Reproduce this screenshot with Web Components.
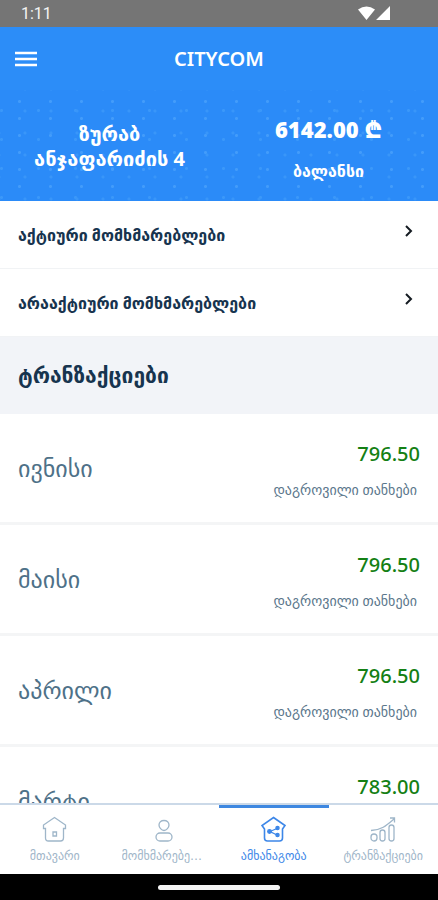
<!DOCTYPE html>
<html lang="ka">
<head>
<meta charset="utf-8">
<meta name="viewport" content="width=device-width, initial-scale=1">
<title>CITYCOM</title>
<style>
  html, body { margin: 0; height: 100%; }
  body { font-family: "Noto Sans", "DejaVu Sans", sans-serif; color: #17344f; background: #fff; }
</style>
</head>
<body>
<city-app>
  <status-bar slot="top" time="1:11"></status-bar>
  <app-bar slot="top">CITYCOM</app-bar>
  <balance-hero amount="6142.00 ₾" label="ბალანსი">ზურაბ ანჯაფარიძის 4</balance-hero>
  <nav-row>აქტიური მომხმარებლები</nav-row>
  <nav-row>არააქტიური მომხმარებლები</nav-row>
  <section-title>ტრანზაქციები</section-title>
  <month-row amount="796.50" note="დაგროვილი თანხები">ივნისი</month-row>
  <month-row amount="796.50" note="დაგროვილი თანხები">მაისი</month-row>
  <month-row amount="796.50" note="დაგროვილი თანხები">აპრილი</month-row>
  <month-row amount="783.00" note="დაგროვილი თანხები">მარტი</month-row>
  <tab-bar slot="bottom">
    <tab-item icon="home">მთავარი</tab-item>
    <tab-item icon="user">მომხმარებელი</tab-item>
    <tab-item icon="share" active>ამხანაგობა</tab-item>
    <tab-item icon="chart">ტრანზაქციები</tab-item>
  </tab-bar>
  <gesture-bar slot="bottom"></gesture-bar>
</city-app>
<script>
class Base extends HTMLElement {
  constructor() { super(); this.attachShadow({ mode: 'open' }); }
  connectedCallback() { this.shadowRoot.innerHTML = this.view(); }
  attr(n) { return this.getAttribute(n) || ''; }
}
customElements.define('city-app', class extends Base {
  view() { return `<style>
    :host { display: flex; flex-direction: column; height: 100vh; }
    main { flex: 1; min-height: 0; overflow: hidden; }
  </style><slot name="top"></slot><main><slot></slot></main><slot name="bottom"></slot>`; }
});
customElements.define('status-bar', class extends Base {
  view() { return `<style>
    :host { display: flex; align-items: center; justify-content: space-between; height: 27px; padding: 0 47px 0 21px;
      background: #757575; color: #f4f4f4; font: 16px Roboto, sans-serif; }
    svg { display: block; }
  </style><span>${this.attr('time')}</span>
  <svg width="33" height="15" viewBox="0 0 33 15" fill="#fff" role="img" aria-label="Wi-Fi"><path d="M0 3.5Q8.500-2.500 17 3.500L8.500 14ZM32 0V14H18Z"/></svg>`; }
});
customElements.define('app-bar', class extends Base {
  view() { return `<style>
    :host { display: grid; grid-template-columns: 52px 1fr 52px; align-items: center; height: 63px; background: #2c8df8; color: #fff; }
    button { height: 52px; padding: 0 0 0 15px; border: 0; background: none; color: inherit; }
    svg { display: block; }
    h1 { margin: 0; text-align: center; font: 600 20px "Noto Sans", sans-serif; }
  </style><button aria-label="Menu"><svg width="22" height="16" viewBox="0 0 22 16" stroke="#fff" stroke-width="2.600"><path d="M0 2H22M0 8H22M0 14H22"/></svg></button><h1><slot></slot></h1>`; }
});
customElements.define('balance-hero', class extends Base {
  view() { return `<style>
    :host { display: grid; grid-template-columns: 1fr 1fr; height: 111px; color: #fff; font-weight: 700; text-align: center;
      background-color: #2b8bf8;
      background-image: radial-gradient(circle, #439cfa 1px, transparent 2px), radial-gradient(circle, #3996f9 1px, transparent 2px), radial-gradient(circle, #3b98f9 1px, transparent 2px);
      background-size: 31px 17px, 26px 22px, 37px 29px; background-position: 4px 3px, 12px 10px, 20px 6px; }
    h2 { margin: 0; padding: 0 24px; align-self: center; font-size: 20px; line-height: 25px; }
    div { display: flex; flex-direction: column; gap: 14px; padding-top: 23px; }
    b { font-size: 22px; line-height: 32px; }
    span { font-size: 16px; line-height: 24px; }
  </style><h2><slot></slot></h2><div><b>${this.attr('amount')}</b><span>${this.attr('label')}</span></div>`; }
});
customElements.define('nav-row', class extends Base {
  view() { return `<style>
    :host { display: block; border-bottom: 1px solid #f1f3f5; }
    a { display: flex; align-items: center; justify-content: space-between; height: 67px; padding: 0 24px 0 18px;
      color: #17344f; text-decoration: none; font-size: 16px; font-weight: 700; }
    svg { margin-bottom: 8px; }
  </style><a href="#"><slot></slot><svg width="10" height="12" viewBox="0 0 10 12" fill="none" stroke="#151b22" stroke-width="2"><path d="M2 1L7 6L2 11"/></svg></a>`; }
});
customElements.define('section-title', class extends Base {
  view() { return `<style>
    :host { display: block; background: #f2f4f8; }
    h2 { margin: 0; padding: 0 18px; font-size: 21px; line-height: 77px; }
  </style><h2><slot></slot></h2>`; }
});
customElements.define('month-row', class extends Base {
  view() { return `<style>
    :host { display: flex; align-items: center; justify-content: space-between; height: 108px; padding: 0 18px; border-bottom: 3px solid #f4f5f6; }
    span { color: #4e7188; font-size: 24px; line-height: 32px; }
    div { display: flex; flex-direction: column; gap: 12px; padding-top: 4px; text-align: right; }
    b { color: #148014; font-weight: 500; font-size: 20px; line-height: 28px; }
    small { padding-right: 3px; color: #5b778c; font-size: 14px; line-height: 20px; }
  </style><span><slot></slot></span><div><b>${this.attr('amount')}</b><small>${this.attr('note')}</small></div>`; }
});
customElements.define('tab-bar', class extends Base {
  view() { return `<style>
    nav { display: grid; grid-template-columns: repeat(4, minmax(0, 1fr)); height: 69px; border-top: 2px solid #cbd9e8; background: #fff; }
  </style><nav><slot></slot></nav>`; }
});
const ICONS = {
  home: '<path d="M12.500 1.500L23.500 9V12.500H21.500V22Q21.500 25 18.500 25H6.500Q3.500 25 3.500 22V12.500H1.500V9Z"/><path d="M11 16H14.500V20H11Z"/>',
  user: '<path d="M13 4.500C16 4.500 18 6.500 18 9C18 11.500 15.500 14.500 13 14.500C10.500 14.500 8 11.500 8 9C8 6.500 10 4.500 13 4.500Z"/><rect x="5" y="17" width="16" height="8" rx="4"/>',
  share: '<path stroke-width="1.600" d="M12.500 1.500L24 9.500L21.500 13V22Q21.500 25 18.500 25H6.500Q3.500 25 3.500 22V13L1 9.500Z"/><path d="M16 12.500L9 15.500L16 19"/><g fill="currentColor"><circle cx="16.500" cy="12" r="1.600"/><circle cx="8.500" cy="15.500" r="1.800"/><circle cx="16.500" cy="19" r="1.600"/></g>',
  chart: '<path d="M1 14.500C12 14 17 9 24 3M20 2L24.500 2L24.500 6.500"/><rect x="1" y="18" width="6" height="7" rx="3"/><rect x="10" y="14" width="5" height="11" rx="2.500"/><rect x="19" y="9" width="5" height="16" rx="2.500"/>'
};
customElements.define('tab-item', class extends Base {
  view() { return `<style>
    :host { display: grid; min-width: 0; color: #9fb6c9; }
    :host([active]) { color: #3d87e8; box-shadow: inset 0 3px #3d87e0; }
    button { display: flex; flex-direction: column; align-items: center; gap: 5px; min-width: 0; padding: 11px 12px 0; border: 0;
      background: none; color: inherit; font: 12px "DejaVu Sans", sans-serif; }
    span { max-width: 100%; overflow: hidden; text-overflow: ellipsis; white-space: nowrap; line-height: 18px; }
    svg { flex: none; }
  </style><button><svg width="26" height="26" viewBox="0 0 26 26" fill="none" stroke="currentColor" stroke-width="1.300">${ICONS[this.attr('icon')]}</svg><span><slot></slot></span></button>`; }
});
customElements.define('gesture-bar', class extends Base {
  view() { return `<style>
    :host { display: flex; align-items: center; justify-content: center; height: 26px; background: #000; }
    i { width: 28%; height: 5px; border-radius: 3px; background: #f4f4f4; }
  </style><i></i>`; }
});
</script>
</body>
</html>
